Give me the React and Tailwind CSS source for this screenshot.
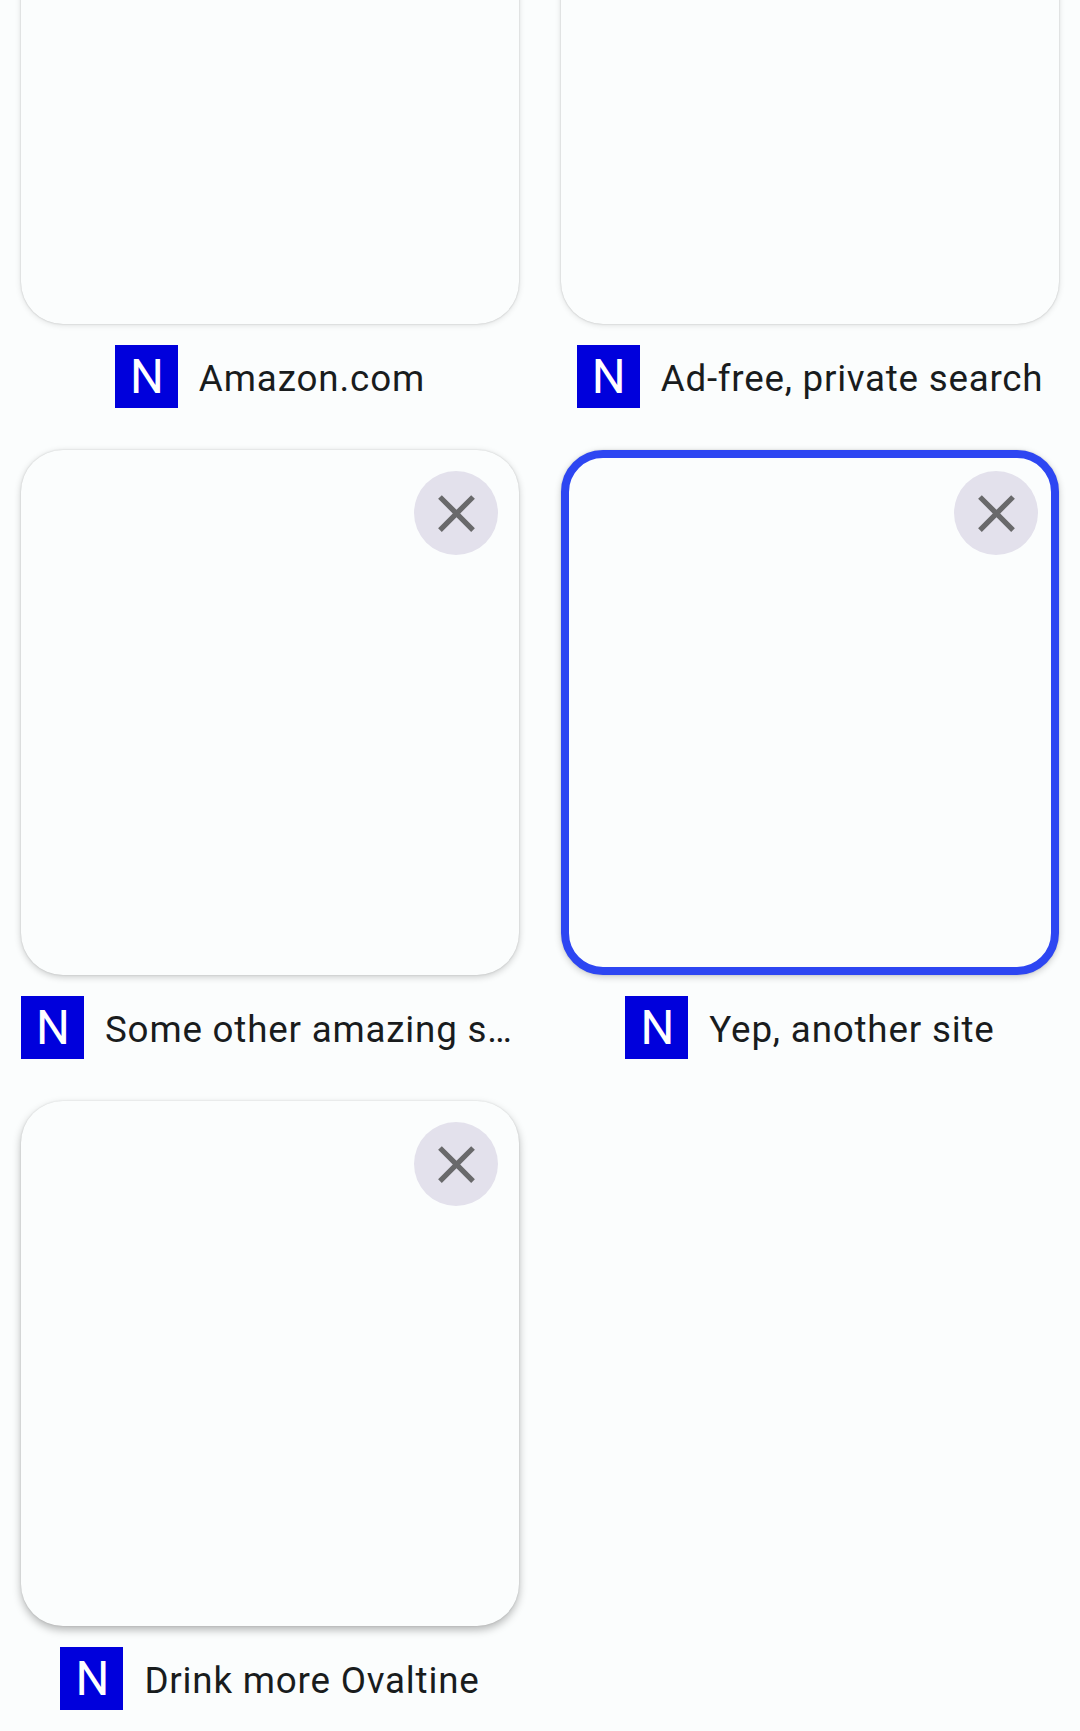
function CloseButton() {
  return (
    <button
      aria-label="Close tab"
      className="flex size-[84px] items-center justify-center rounded-full bg-[#e3e1ec] pt-px pl-px text-[#69696b]"
    >
      <svg viewBox="0 0 24 24" className="size-[63px] shrink-0" fill="currentColor">
        <path d="M19 6.41L17.59 5 12 10.59 6.41 5 5 6.41 10.59 12 5 17.59 6.41 19 12 13.41 17.59 19 19 17.59 13.41 12z" />
      </svg>
    </button>
  );
}

// Elevation shadows deepen the further down the page a card sits.
const topRow = "-mt-[60px] h-[384px] rounded-[42px] shadow-[0_0_2px_rgba(0,0,0,0.2),0_1px_6px_rgba(0,0,0,0.12)]";
const middleRow = "h-[525px] rounded-[42px] shadow-[0_0_2px_rgba(0,0,0,0.14),0_2px_7px_rgba(0,0,0,0.2)]";
const bottomRow = "h-[525px] rounded-[42px] shadow-[0_0_2px_rgba(0,0,0,0.12),0_4px_9px_rgba(0,0,0,0.28)]";

const cards = [
  { title: "Amazon.com", tracking: "tracking-[0.88px]", className: topRow },
  { title: "Ad-free, private search", tracking: "tracking-[0.75px]", className: topRow },
  { title: "Some other amazing s…", tracking: "tracking-[0.8px]", closable: true, className: middleRow },
  { title: "Yep, another site", tracking: "tracking-[0.82px]", closable: true, selected: true, className: middleRow },
  { title: "Drink more Ovaltine", tracking: "tracking-[0.8px]", closable: true, className: bottomRow },
];

function TabCard({ title, tracking, closable, selected, className }) {
  return (
    <div className="flex min-w-0 flex-col gap-[21px]">
      <div
        className={`flex justify-end bg-[#fbfdfd] ${className} ${
          selected ? "border-8 border-[#2d46f2] p-[13px]" : "p-[21px]"
        }`}
      >
        {closable && <CloseButton />}
      </div>
      <div
        className={`flex h-[63px] items-center gap-[21px] ${
          title.endsWith("…") ? "justify-start" : "justify-center"
        }`}
      >
        <div className="flex size-[63px] shrink-0 items-center justify-center bg-[#0000dc] pt-px pl-px text-[47.5px] leading-[48px] text-white">
          N
        </div>
        <div className={`pt-[5px] text-[36.75px] leading-[52px] whitespace-nowrap text-[#191c1d] ${tracking}`}>
          {title}
        </div>
      </div>
    </div>
  );
}

export default function App() {
  return (
    <main className="grid h-[1731px] w-[1080px] grid-cols-2 content-start gap-[42px] overflow-hidden bg-[#fbfdfd] px-[21px] font-['Roboto',sans-serif]">
      {cards.map((card) => (
        <TabCard key={card.title} {...card} />
      ))}
    </main>
  );
}
